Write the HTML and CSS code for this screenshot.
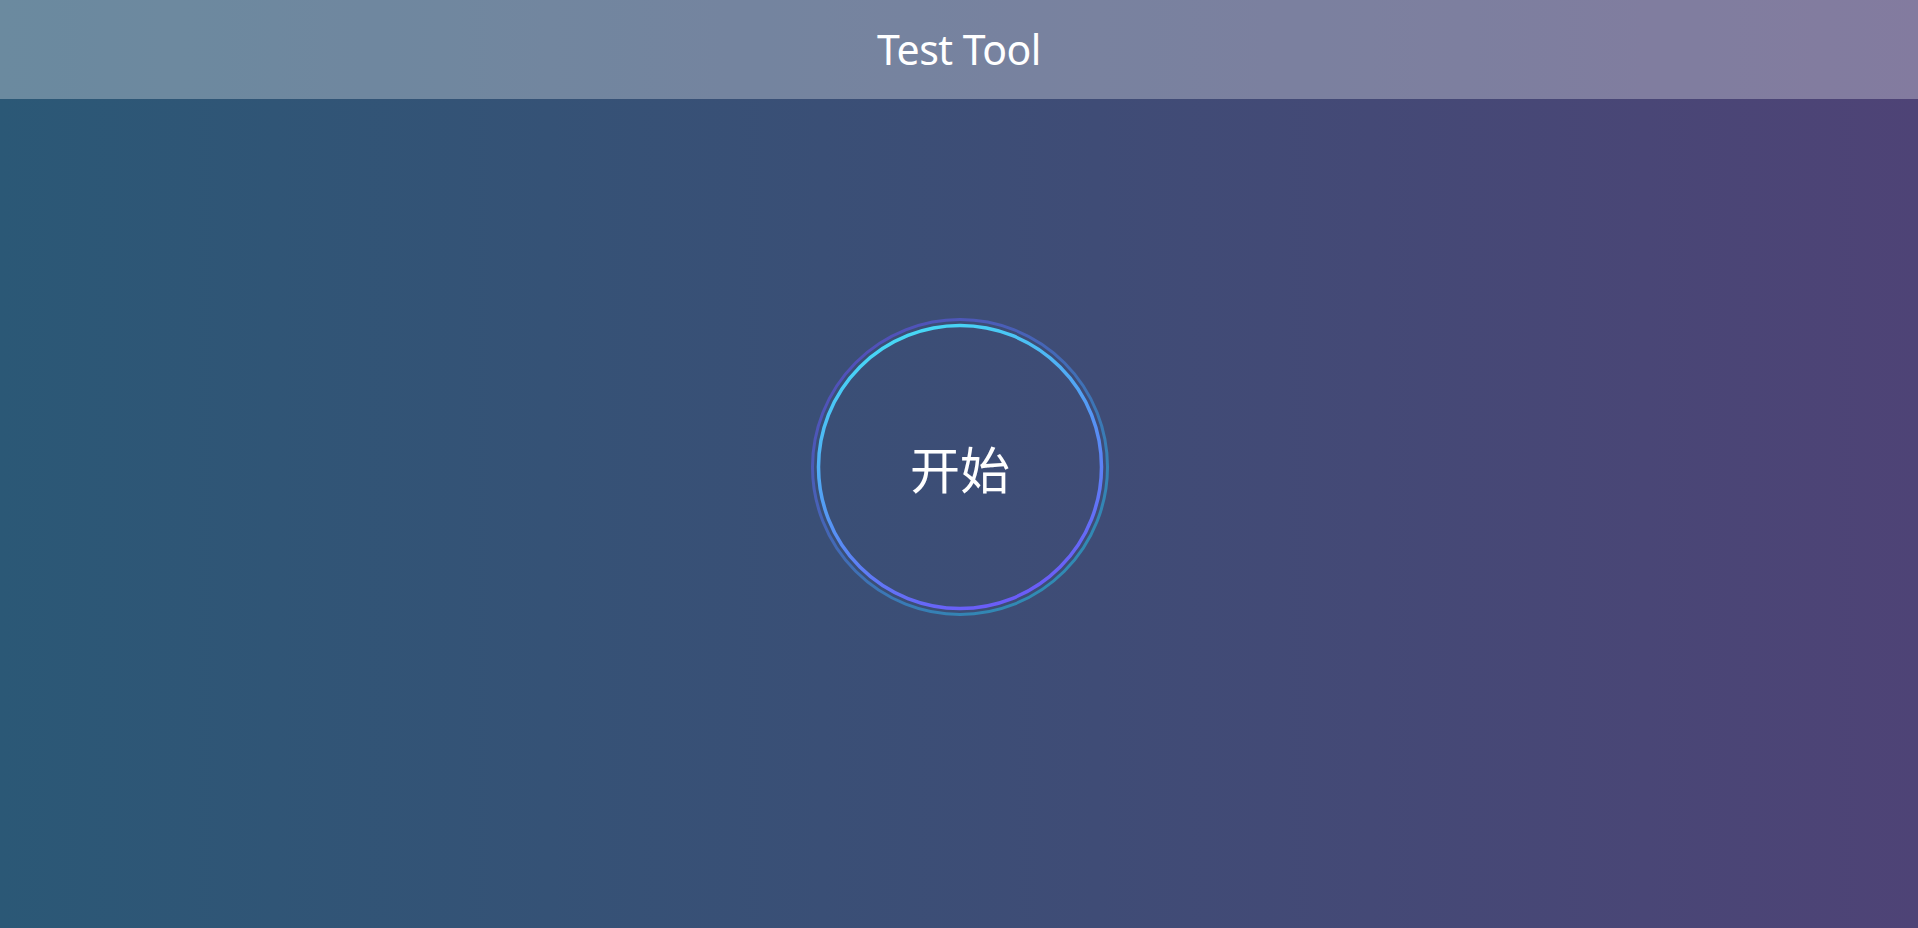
FILE: index.html
```html
<!DOCTYPE html>
<html lang="zh-CN">
<head>
<meta charset="utf-8">
<title>Test Tool</title>
<link rel="stylesheet" href="styles.css">
</head>
<body>
  <header class="topbar">
    <h1 class="title">Test Tool</h1>
  </header>
  <main class="stage">
    <button class="start-btn" type="button">
      <svg class="rings" viewBox="0 0 300 300" width="300" height="300" aria-hidden="true">
        <defs>
          <linearGradient id="gInner" x1="0.3" y1="0" x2="0.7" y2="1">
            <stop offset="0" stop-color="#46dcf6"/>
            <stop offset="0.5" stop-color="#5596f4"/>
            <stop offset="1" stop-color="#6c58f8"/>
          </linearGradient>
          <linearGradient id="gOuter" x1="0.15" y1="0.1" x2="0.85" y2="0.9">
            <stop offset="0" stop-color="#5a4fd0"/>
            <stop offset="1" stop-color="#2aa2c8"/>
          </linearGradient>
        </defs>
        <circle cx="150" cy="150" r="147.5" fill="none" stroke="url(#gOuter)" stroke-width="3" opacity="0.75"/>
        <circle cx="150" cy="150" r="141.5" fill="none" stroke="url(#gInner)" stroke-width="3.5"/>
      </svg>
      <span class="label">开始</span>
    </button>
  </main>
</body>
</html>
```
FILE: styles.css
```css
html, body {
  margin: 0;
  padding: 0;
}

body {
  min-height: 100vh;
  background: linear-gradient(to right, #2b5876, #4e4376);
  font-family: "Noto Sans", "Open Sans", "Noto Sans CJK SC", sans-serif;
  color: #fff;
}

.topbar {
  height: 99px;
  display: flex;
  align-items: center;
  justify-content: center;
  background: rgba(255, 255, 255, 0.3);
}

.title {
  margin: 0;
  font-family: "Noto Sans", "Open Sans", sans-serif;
  font-weight: 400;
  font-size: 41px;
  letter-spacing: -0.5px;
  line-height: 1;
  color: #fff;
}

.stage {
  display: flex;
  justify-content: center;
  padding-top: 218px;
  padding-left: 2px;
}

.start-btn {
  display: grid;
  place-items: center;
  width: 300px;
  height: 300px;
  padding: 0;
  border: 0;
  background: transparent;
  cursor: pointer;
}

.rings,
.label {
  grid-area: 1 / 1;
}

.rings {
  display: block;
}

.label {
  font-family: "Noto Sans CJK SC", "Noto Sans", sans-serif;
  font-size: 50px;
  line-height: 1;
  color: #fff;
  padding-top: 0;
  padding-right: 0;
}
```
